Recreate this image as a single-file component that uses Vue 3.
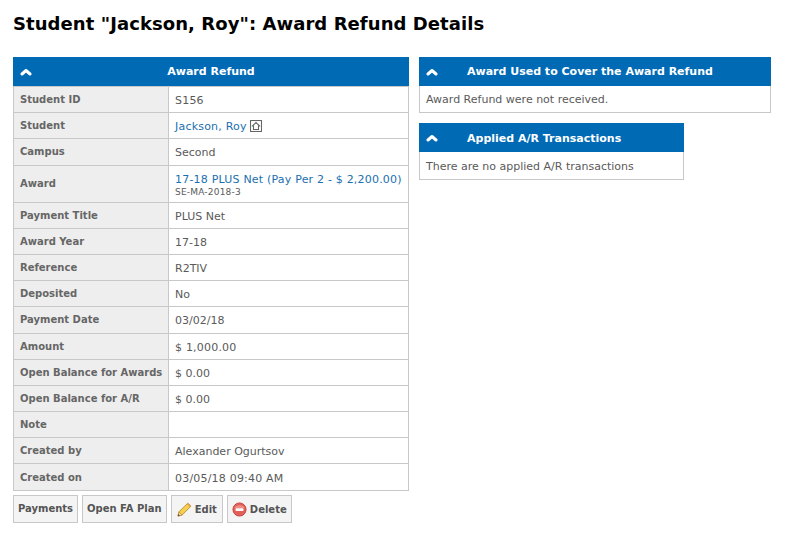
<template>
  <div class="page">
    <h1>Student "Jackson, Roy": Award Refund Details</h1>
    <div class="columns">
      <div class="left">
        <div class="panel-head">
          <svg class="chevron" viewBox="0 0 12 8"><path d="M2 6 6 2.500 10 6" /></svg>
          <span class="head-center">Award Refund</span>
        </div>
        <table class="details">
          <tbody>
            <tr v-for="row in rows" :key="row.label" :class="{ tall: row.sub, spaced: row.spaced }">
              <th>{{ row.label }}</th>
              <td>
                <template v-if="row.sub">
                  <a class="link">{{ row.value }}</a>
                  <div class="sub">{{ row.sub }}</div>
                </template>
                <template v-else-if="row.link">
                  <a class="link">{{ row.value }}</a>
                  <svg class="house" viewBox="0 0 12 12">
                    <rect x="0.5" y="0.5" width="11" height="11" />
                    <path d="M2 6.300 6 2.500l4 3.800M3.500 5.500v4h5v-4" />
                  </svg>
                </template>
                <template v-else>{{ row.value }}</template>
              </td>
            </tr>
          </tbody>
        </table>
        <div class="buttons">
          <button type="button">Payments</button>
          <button type="button">Open FA Plan</button>
          <button type="button" class="icon-btn edit-btn">
            <svg viewBox="0 0 16 16" width="16" height="16">
              <path d="M1 15l1-4.500L11.500 1.200l3.400 3.200L5.400 14z" fill="#f4cf52" stroke="#b98a2a" stroke-width="0.9" />
              <path d="M1 15l1-4.500 3.400 3.500z" fill="#f3dcb4" stroke="#b98a2a" stroke-width="0.7" />
              <path d="M1 15l.5-2.200 1.700 1.700z" fill="#444" />
              <path d="M10.400 2.300l3.400 3.200 1.100-1.100-3.400-3.200z" fill="#e8a24a" />
            </svg>
            Edit
          </button>
          <button type="button" class="icon-btn">
            <svg viewBox="0 0 16 16" width="16" height="16">
              <circle cx="8" cy="8" r="7" fill="#e2605a" stroke="#c8403c" />
              <path d="M2.500 6.500a6 5 0 0 1 11 0z" fill="#f08e86" />
              <rect x="3.800" y="6.700" width="8.400" height="2.800" rx="0.6" fill="#fff" />
            </svg>
            Delete
          </button>
        </div>
      </div>
      <div class="right">
        <div class="panel wide">
          <div class="panel-head">
            <svg class="chevron" viewBox="0 0 12 8"><path d="M2 6 6 2.500 10 6" /></svg>
            <span class="head-title">Award Used to Cover the Award Refund</span>
          </div>
          <div class="panel-body">Award Refund were not received.</div>
        </div>
        <div class="panel narrow">
          <div class="panel-head">
            <svg class="chevron" viewBox="0 0 12 8"><path d="M2 6 6 2.500 10 6" /></svg>
            <span class="head-title">Applied A/R Transactions</span>
          </div>
          <div class="panel-body">There are no applied A/R transactions</div>
        </div>
      </div>
    </div>
  </div>
</template>

<script setup>
const rows = [
  { label: 'Student ID', value: 'S156', spaced: true },
  { label: 'Student', value: 'Jackson, Roy', link: true, spaced: true },
  { label: 'Campus', value: 'Second' },
  { label: 'Award', value: '17-18 PLUS Net (Pay Per 2 - $ 2,200.00)', sub: 'SE-MA-2018-3', spaced: true },
  { label: 'Payment Title', value: 'PLUS Net' },
  { label: 'Award Year', value: '17-18' },
  { label: 'Reference', value: 'R2TIV' },
  { label: 'Deposited', value: 'No' },
  { label: 'Payment Date', value: '03/02/18' },
  { label: 'Amount', value: '$ 1,000.00', spaced: true },
  { label: 'Open Balance for Awards', value: '$ 0.00' },
  { label: 'Open Balance for A/R', value: '$ 0.00' },
  { label: 'Note', value: '' },
  { label: 'Created by', value: 'Alexander Ogurtsov' },
  { label: 'Created on', value: '03/05/18 09:40 AM', spaced: true }
]
</script>

<style scoped>
.page {
  width: 785px;
  height: 535px;
  box-sizing: border-box;
  padding: 12px 14px 0 13px;
  font-family: "DejaVu Sans", Verdana, sans-serif;
  font-size: 11px;
  color: #5a5a5a;
  background: #fff;
  overflow: hidden;
}

h1 {
  margin: 0 0 21px;
  font-size: 18px;
  line-height: 24px;
  font-weight: bold;
  letter-spacing: 0.07px;
  color: #000;
}

.columns {
  display: flex;
  gap: 10px;
  align-items: flex-start;
}

.left {
  width: 396px;
}

.right {
  display: flex;
  flex-direction: column;
  gap: 10px;
}

.panel-head {
  display: flex;
  align-items: center;
  height: 29px;
  background: #006ab5;
  color: #fff;
  font-weight: bold;
  padding-left: 7px;
}

.chevron {
  width: 12px;
  height: 8px;
  flex: none;
}

.chevron path {
  fill: none;
  stroke: #fff;
  stroke-width: 3;
  stroke-linejoin: round;
  stroke-linecap: round;
}

.head-center {
  flex: 1;
  text-align: center;
  padding-right: 19px;
}

.head-title {
  margin-left: 29px;
}

.details {
  width: 396px;
  border-collapse: collapse;
  table-layout: fixed;
}

.details th,
.details td {
  border: 1px solid #c8c8c8;
  height: 26.2px;
  padding: 0 6px;
  box-sizing: border-box;
  text-align: left;
}

.details tr.tall th,
.details tr.tall td {
  height: 37px;
}

.details th {
  width: 155px;
  background: #eee;
  font-size: 10px;
  font-weight: bold;
  white-space: nowrap;
  color: #666;
}

.details td {
  padding-top: 2px;
  font-size: 11px;
}

.details tr.spaced td {
  letter-spacing: 0.2px;
}

.link {
  color: #1a6fb0;
}

.sub {
  font-size: 9px;
  line-height: 10px;
  margin-top: 1px;
}

.house {
  width: 12px;
  height: 12px;
  margin-left: 3px;
  vertical-align: -2px;
}

.house rect,
.house path {
  fill: none;
  stroke: #666;
  stroke-width: 1.1;
}

.buttons {
  display: flex;
  gap: 4px;
  margin-top: 4px;
}

.buttons button {
  height: 28px;
  padding: 0 4px;
  border: 1px solid #c8c8c8;
  background: #f4f4f4;
  color: #555;
  font-family: inherit;
  font-size: 10px;
  font-weight: bold;
  cursor: pointer;
  display: flex;
  align-items: center;
  gap: 3px;
}

.buttons .icon-btn {
  padding: 1px 4px 0;
}

.buttons .edit-btn {
  padding: 1px 5px 0;
}

.buttons .icon-btn svg {
  width: 15px;
  height: 15px;
}

.panel-body {
  height: 27px;
  box-sizing: border-box;
  border: 1px solid #c8c8c8;
  border-top: none;
  padding: 1px 6px 0;
  display: flex;
  align-items: center;
}

.panel.wide {
  width: 352px;
}

.panel.narrow {
  width: 265px;
}

.panel.narrow .panel-head {
  padding-top: 1px;
  height: 28px;
}

.panel.narrow .panel-body {
  height: 28px;
}
</style>
